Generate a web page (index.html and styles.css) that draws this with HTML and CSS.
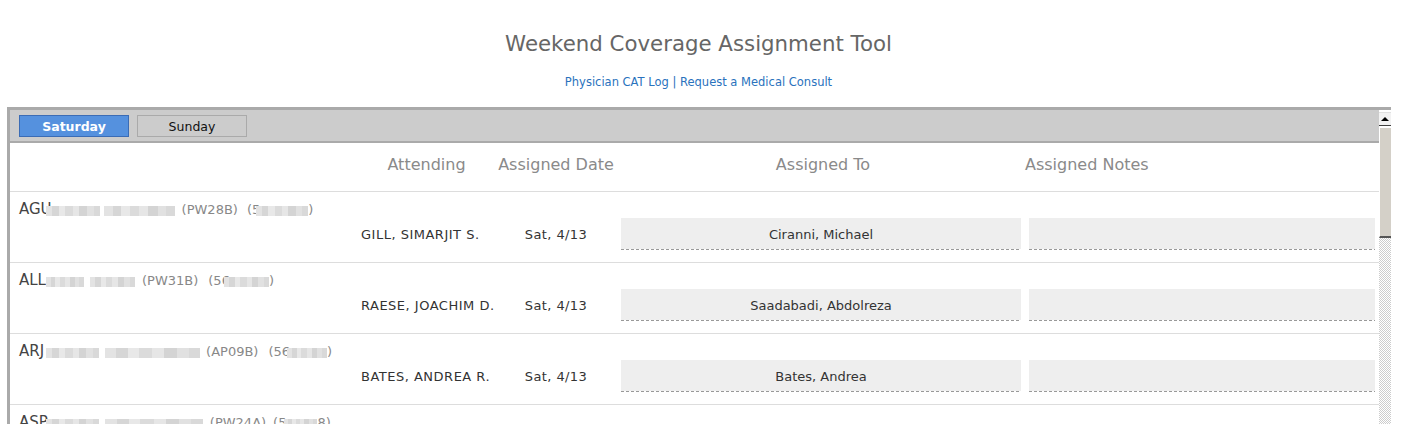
FILE: index.html
```html
<!DOCTYPE html>
<html>
<head>
<meta charset="utf-8">
<title>Weekend Coverage Assignment Tool</title>
<link rel="stylesheet" href="styles.css">
</head>
<body>
<header class="page-head">
  <h1 class="title">Weekend Coverage Assignment Tool</h1>
  <nav class="links"><a href="#">Physician CAT Log</a> | <a href="#">Request a Medical Consult</a></nav>
</header>

<section class="panel">
  <div class="main">
    <div class="toolbar">
      <button class="tab tab-active">Saturday</button>
      <button class="tab">Sunday</button>
    </div>

    <div class="grid head-row">
      <div></div>
      <div class="h h-att">Attending</div>
      <div class="h h-date">Assigned Date</div>
      <div class="h h-to">Assigned To</div>
      <div class="h h-notes">Assigned Notes</div>
    </div>

    <div class="grid row">
      <div class="pt">
        <span class="nm">AGU</span><span class="blur w54 ml-n6"></span><span class="blur w71 ml4"></span><span class="code ml7">(PW28B)</span><span class="code ml9">(5<span class="blur w52 ml-n4"></span>)</span>
      </div>
      <div class="cell att">GILL, SIMARJIT S.</div>
      <div class="cell date">Sat, 4/13</div>
      <div class="box box-to">Ciranni, Michael</div>
      <div class="box box-notes"></div>
    </div>

    <div class="grid row">
      <div class="pt">
        <span class="nm">ALL</span><span class="blur w38"></span><span class="blur w45 ml6"></span><span class="code ml7">(PW31B)</span><span class="code ml10">(56<span class="blur w45 ml-n6"></span>)</span>
      </div>
      <div class="cell att">RAESE, JOACHIM D.</div>
      <div class="cell date">Sat, 4/13</div>
      <div class="box box-to">Saadabadi, Abdolreza</div>
      <div class="box box-notes"></div>
    </div>

    <div class="grid row">
      <div class="pt">
        <span class="nm">ARJ</span><span class="blur w53 ml2"></span><span class="blur w95 ml6"></span><span class="code ml6">(AP09B)</span><span class="code ml10">(56<span class="blur w40 ml-n3"></span>)</span>
      </div>
      <div class="cell att">BATES, ANDREA R.</div>
      <div class="cell date">Sat, 4/13</div>
      <div class="box box-to">Bates, Andrea</div>
      <div class="box box-notes"></div>
    </div>

    <div class="grid row">
      <div class="pt">
        <span class="nm">ASP</span><span class="blur w53 ml-n2"></span><span class="blur w98 ml6"></span><span class="code ml7">(PW24A)</span><span class="code ml7">(5<span class="blur w33 ml-n2"></span>8)</span>
      </div>
      <div class="cell att">GILL, SIMARJIT S.</div>
      <div class="cell date">Sat, 4/13</div>
      <div class="box box-to">Ciranni, Michael</div>
      <div class="box box-notes"></div>
    </div>
  </div>

  <div class="scrollbar">
    <div class="sb-up"><span class="sb-arrow"></span></div>
    <div class="sb-thumb"></div>
    <div class="sb-track"></div>
  </div>
</section>
</body>
</html>
```

FILE: styles.css
```css
html, body {
  margin: 0;
  padding: 0;
  background: #fff;
  overflow: hidden;
}
body {
  font-family: "DejaVu Sans", Verdana, sans-serif;
  color: #333;
}

.page-head {
  text-align: center;
  padding-top: 32px;
  padding-right: 8px;
}
.title {
  margin: 0;
  font-size: 21.3px;
  line-height: 24px;
  font-weight: normal;
  color: #666;
}
.links {
  margin-top: 19px;
  font-size: 11.5px;
  line-height: 14px;
  color: #2a72bd;
}
.links a {
  color: #2a72bd;
  text-decoration: none;
}

.panel {
  margin-top: 18px;
  margin-left: 7px;
  width: 1384px;
  height: 700px;
  border-top: 3px solid #aaa;
  border-left: 3px solid #aaa;
  display: flex;
  box-sizing: border-box;
}
.main {
  flex: 1;
  min-width: 0;
}

.toolbar {
  background: #ccc;
  border-bottom: 2px solid #aaa;
  padding: 5px 9px 4px;
  display: flex;
  gap: 8px;
}
.tab {
  width: 110px;
  height: 22px;
  box-sizing: border-box;
  border: 1px solid #aaa;
  background: #ccc;
  color: #111;
  font-family: "DejaVu Sans", Verdana, sans-serif;
  font-size: 12.5px;
  line-height: 20px;
  padding: 1px 0 0;
  margin: 0;
}
.tab-active {
  background: #5591de;
  border-color: #3b6cb5;
  color: #fff;
  font-weight: bold;
}

.grid {
  display: grid;
  grid-template-columns: 340px 153px 106px 416px 354px;
  border-bottom: 1px solid #ddd;
}
.head-row {
  height: 48px;
  align-items: center;
}
.h {
  font-size: 16px;
  line-height: 19px;
  color: #8a8a8a;
  white-space: nowrap;
  padding-bottom: 6px;
}
.h-att, .h-date, .h-to {
  justify-self: center;
}
.h-to { margin-left: 12px; }
.h-notes { justify-self: start; }

.row {
  height: 70px;
  align-items: start;
}
.pt {
  padding: 8px 0 0 9px;
  white-space: nowrap;
  font-size: 15px;
  line-height: 18px;
}
.nm {
  color: #444;
}
.code {
  font-size: 13px;
  color: #888;
}
.blur {
  display: inline-block;
  height: 10px;
  vertical-align: -2px;
  background:
    linear-gradient(90deg,
      #e3e3e3 0 12%, #d6d6d6 12% 24%, #e8e8e8 24% 36%, #dbdbdb 36% 50%,
      #e6e6e6 50% 62%, #d4d4d4 62% 76%, #e1e1e1 76% 88%, #d9d9d9 88% 100%);
}
.w33 { width: 33px; }
.w38 { width: 38px; }
.w40 { width: 40px; }
.w45 { width: 45px; }
.w52 { width: 52px; }
.w53 { width: 53px; }
.w54 { width: 54px; }
.w71 { width: 71px; }
.w95 { width: 95px; }
.w98 { width: 98px; }
.ml-n6 { margin-left: -6px; }
.ml-n4 { margin-left: -4px; }
.ml-n3 { margin-left: -3px; }
.ml-n2 { margin-left: -2px; }
.ml2 { margin-left: 2px; }
.ml4 { margin-left: 4px; }
.ml6 { margin-left: 6px; }
.ml7 { margin-left: 7px; }
.ml9 { margin-left: 9px; }
.ml10 { margin-left: 10px; }

.cell {
  margin-top: 26px;
  padding-top: 2px;
  line-height: 29px;
  font-size: 13px;
  color: #333;
  white-space: nowrap;
}
.att {
  padding-left: 11px;
  letter-spacing: 0.5px;
}
.date {
  text-align: center;
  letter-spacing: 0.4px;
}
.box {
  margin-top: 26px;
  height: 32px;
  box-sizing: border-box;
  padding-top: 2px;
  line-height: 29px;
  font-size: 13px;
  color: #333;
  text-align: center;
  background:
    repeating-linear-gradient(90deg, #999 0 3px, transparent 3px 5px) left bottom / 100% 1px no-repeat,
    linear-gradient(#eee, #eee) left top / 100% 31px no-repeat;
}
.box-to {
  margin-left: 12px;
  margin-right: 4px;
}
.box-notes {
  margin-left: 4px;
  margin-right: 4px;
}

.scrollbar {
  width: 12px;
  margin-top: 2px;
  display: flex;
  flex-direction: column;
}
.sb-up {
  height: 14px;
  background: #f2f2f2;
  border-top: 1px solid #e0e0e0;
  border-bottom: 1px solid #404040;
  box-sizing: border-box;
  display: flex;
  align-items: center;
  justify-content: center;
}
.sb-arrow {
  width: 0;
  height: 0;
  border-left: 4px solid transparent;
  border-right: 4px solid transparent;
  border-bottom: 4px solid #000;
}
.sb-thumb {
  margin-top: 1px;
  height: 111px;
  box-sizing: border-box;
  background: #d4d0c8;
  border-top: 1px solid #fff;
  border-left: 1px solid #fff;
  border-bottom: 2px solid #555;
}
.sb-track {
  flex: 1;
  background-color: #fff;
  background-image:
    linear-gradient(45deg, #ccc 25%, transparent 25%, transparent 75%, #ccc 75%),
    linear-gradient(45deg, #ccc 25%, transparent 25%, transparent 75%, #ccc 75%);
  background-size: 2px 2px;
  background-position: 0 0, 1px 1px;
}
```
